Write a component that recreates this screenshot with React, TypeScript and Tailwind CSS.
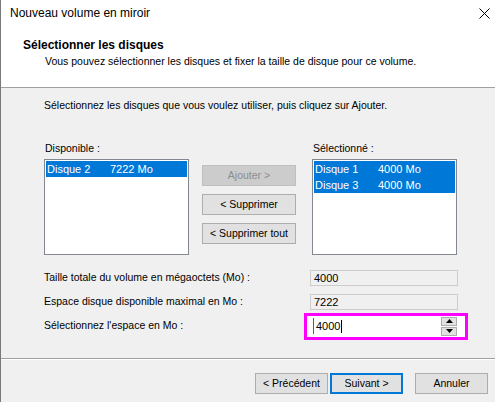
import type { ReactNode } from "react";

const baseBtn =
  "h-[21px] flex items-center justify-center text-[10.5px] leading-none box-border";

function WinButton({
  children,
  variant = "normal",
  className = "",
}: {
  children: ReactNode;
  variant?: "normal" | "disabled" | "primary";
  className?: string;
}) {
  let look = "border border-[#adadad] bg-[#e1e1e1] text-black";
  if (variant === "disabled") look = "border border-[#bfbfbf] bg-[#cccccc] text-[#8d8d8d]";
  if (variant === "primary") look = "border-2 border-[#0078d7] bg-[#e1e1e1] text-black";
  return <div className={`${baseBtn} ${look} ${className}`}>{children}</div>;
}

function ListRow({ name, size }: { name: string; size: string }) {
  return (
    <div className="h-[16px] bg-[#0078d7] text-white flex items-center pl-[1px] text-[11px]">
      <span className="w-[63px]">{name}</span>
      <span>{size}</span>
    </div>
  );
}

function ReadOnlyField({ value }: { value: string }) {
  return (
    <div className="w-[148px] h-[16px] border border-[#cccccc] bg-[#f0f0f0] flex items-center pl-[3px] text-[11px]">
      {value}
    </div>
  );
}

function SpinArrow({ up }: { up?: boolean }) {
  return (
    <div className="w-[16px] h-[9px] border border-[#adadad] bg-[#e1e1e1] flex items-center justify-center">
      <svg width="7" height="4" viewBox="0 0 7 4">
        {up ? <polygon points="0,4 7,4 3.5,0" fill="#000" /> : <polygon points="0,0 7,0 3.5,4" fill="#000" />}
      </svg>
    </div>
  );
}

export default function App() {
  return (
    <div className="w-[495px] h-[402px] overflow-hidden flex flex-col bg-[#f0f0f0] border-l border-[#7a7a7a] text-black font-['Liberation_Sans',Arial,sans-serif]">
      {/* Title + wizard header */}
      <div className="h-[88px] shrink-0 bg-white border-b border-[#a0a0a0] flex flex-col">
        <div className="h-[26px] flex items-center justify-between pl-[9px] pr-[5px]">
          <span className="text-[12px]">Nouveau volume en miroir</span>
          <svg width="11" height="11" viewBox="0 0 11 11">
            <path d="M0.5 0.5 L10.5 10.5 M10.5 0.5 L0.5 10.5" stroke="#000" strokeWidth="1" />
          </svg>
        </div>
        <div className="mt-[11px] pl-[22px] text-[12px] leading-[16px] font-bold">
          Sélectionner les disques
        </div>
        <div className="pl-[44px] text-[10.5px] leading-[16px]">
          Vous pouvez sélectionner les disques et fixer la taille de disque pour ce volume.
        </div>
      </div>

      {/* Body */}
      <div className="flex-1 flex flex-col pl-[43px] pt-[9px] text-[10.5px]">
        <div className="leading-[16px]">
          Sélectionnez les disques que vous voulez utiliser, puis cliquez sur Ajouter.
        </div>

        <div className="mt-[27px] flex">
          <div className="w-[145px]">
            <div className="leading-[16px] pl-[1px]">Disponible :</div>
            <div className="mt-[3px] h-[96px] border border-[#828790] bg-white p-[1px]">
              <ListRow name="Disque 2" size="7222 Mo" />
            </div>
          </div>

          <div className="ml-[13px] mt-[25px] w-[94px] flex flex-col gap-[8px]">
            <WinButton variant="disabled">Ajouter &gt;</WinButton>
            <WinButton>&lt; Supprimer</WinButton>
            <WinButton>&lt; Supprimer tout</WinButton>
          </div>

          <div className="ml-[16px] w-[145px]">
            <div className="leading-[16px] pl-[1px]">Sélectionné :</div>
            <div className="mt-[3px] h-[96px] border border-[#828790] bg-white pt-[1px] px-[1px]">
              <ListRow name="Disque 1" size="4000 Mo" />
              <ListRow name="Disque 3" size="4000 Mo" />
            </div>
          </div>
        </div>

        <div className="mt-[11px] flex flex-col">
          <div className="h-[24px] flex items-center">
            <span className="w-[266px]">Taille totale du volume en mégaoctets (Mo) :</span>
            <ReadOnlyField value="4000" />
          </div>
          <div className="h-[24px] flex items-center">
            <span className="w-[266px]">Espace disque disponible maximal en Mo :</span>
            <ReadOnlyField value="7222" />
          </div>
          <div className="h-[24px] flex items-center">
            <span className="w-[260px]">Sélectionnez l'espace en Mo :</span>
            <div className="w-[164px] h-[27px] shrink-0 border-[3px] border-[#ff00ff] bg-white flex items-center">
              <div className="ml-[6px] w-px h-[16px] bg-[#0078d7]" />
              <span className="ml-[2px] text-[11px]">4000</span>
              <div className="ml-px w-px h-[13px] bg-black" />
              <div className="ml-auto mr-[8px] flex flex-col gap-[1px]">
                <SpinArrow up />
                <SpinArrow />
              </div>
            </div>
          </div>
        </div>
      </div>

      {/* Separator */}
      <div className="h-[2px] shrink-0 border-t border-[#a0a0a0] bg-white" />

      {/* Footer */}
      <div className="h-[42px] shrink-0 flex justify-end items-start pt-[13px] pr-[7px]">
        <WinButton className="w-[73px]">&lt; Précédent</WinButton>
        <WinButton variant="primary" className="w-[73px] ml-[2px]">
          Suivant &gt;
        </WinButton>
        <WinButton className="w-[73px] ml-[12px]">Annuler</WinButton>
      </div>
    </div>
  );
}
